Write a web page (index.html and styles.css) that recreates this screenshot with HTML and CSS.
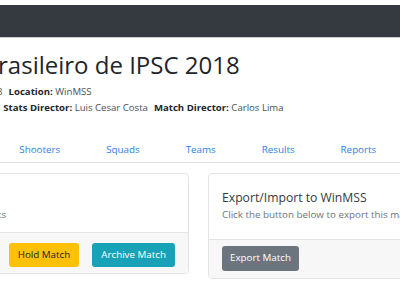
FILE: index.html
```html
<!DOCTYPE html>
<html lang="en">
<head>
<meta charset="utf-8">
<title>Match</title>
<link rel="stylesheet" href="styles.css">
</head>
<body>
<header class="topbar"></header>
<main class="page">
  <h1 class="title">Campeonato Brasileiro de IPSC 2018</h1>
  <p class="meta">
    <span><b>Match Level:</b> Level III</span>
    <span><b>Date:</b> 2/6/2018</span>
    <span><b>Location:</b> WinMSS</span>
  </p>
  <p class="meta">
    <span><b>Range Master:</b> Paulo Ricardo Santos</span>
    <span><b>Stats Director:</b> Luis Cesar Costa</span>
    <span><b>Match Director:</b> Carlos Lima</span>
  </p>
  <nav class="tabs">
    <a class="tab active" href="#">Overview</a>
    <a class="tab" href="#">Stages</a>
    <a class="tab" href="#">Shooters</a>
    <a class="tab" href="#">Squads</a>
    <a class="tab" href="#">Teams</a>
    <a class="tab" href="#">Results</a>
    <a class="tab" href="#">Reports</a>
  </nav>
  <div class="cards">
    <section class="card card-status">
      <div class="card-body">
        <h2 class="card-title">Match Status</h2>
        <p class="card-text">Hold or archive this match's results</p>
      </div>
      <div class="card-footer footer-end">
        <button class="btn btn-warning">Hold Match</button>
        <button class="btn btn-info">Archive Match</button>
      </div>
    </section>
    <section class="card card-export">
      <div class="card-body">
        <h2 class="card-title">Export/Import to WinMSS</h2>
        <p class="card-text">Click the button below to export this match to WinMSS.</p>
      </div>
      <div class="card-footer">
        <button class="btn btn-secondary">Export Match</button>
      </div>
    </section>
  </div>
</main>
</body>
</html>
```
FILE: styles.css
```css
html, body {
  margin: 0;
  padding: 0;
  background: #fff;
  overflow: hidden;
}
body {
  font-family: "Open Sans", "Noto Sans", sans-serif;
  color: #212529;
  padding-top: 5px;
}
.topbar {
  height: 32px;
  background: #343a40;
  border-bottom: 1px solid #c8c9cb;
}
.page {
  margin-left: -168px;
  width: 733px;
}
.title {
  margin: 9px 0 0;
  font-size: 24px;
  line-height: 36px;
  font-weight: 400;
  white-space: nowrap;
  color: #212529;
}
.meta {
  display: flex;
  gap: 6px;
  margin: 0;
  font-size: 9.6px;
  line-height: 16px;
  white-space: nowrap;
  color: #4a5056;
}
.title + .meta { margin-top: 1px; }
.meta b { color: #212529; font-weight: 700; }
.tabs {
  display: flex;
  margin-top: 22px;
  border-bottom: 1px solid #dee2e6;
}
.tab {
  flex: none;
  padding: 4px 23px;
  font-size: 9.8px;
  line-height: 16px;
  color: #2a80e8;
  text-decoration: none;
}
.cards {
  display: flex;
  align-items: flex-start;
  gap: 19px;
  margin-top: 10px;
}
.card {
  flex: 1 1 0;
  border: 1px solid #e3e4e6;
  border-radius: 4px;
  background: #fff;
  overflow: hidden;
}
.card-body {
  padding: 15px 13px 16px;
}
.card-status .card-body { padding-bottom: 9px; }
.card-title {
  margin: 0;
  font-size: 12.2px;
  line-height: 18px;
  font-weight: 400;
  color: #343a40;
  white-space: nowrap;
}
.card-text {
  margin: 0;
  font-size: 9.8px;
  line-height: 16px;
  color: #6c757d;
  white-space: nowrap;
}
.card-footer {
  display: flex;
  gap: 13px;
  padding: 6px 13px 7px;
  background: #f7f7f7;
  border-top: 1px solid #e3e4e6;
}
.card-status .card-footer { padding: 10px 13px 6px; }
.footer-end { justify-content: flex-end; }
.btn {
  font-family: inherit;
  font-size: 9.8px;
  line-height: 16px;
  padding: 4px 9px;
  border: 0;
  border-radius: 3px;
}
.card-export .btn { padding: 4px 8px 5px; }
.btn-warning { background: #ffc107; color: #212529; }
.btn-info { background: #17a2b8; color: #fff; }
.btn-secondary { background: #6c757d; color: #fff; }
```
